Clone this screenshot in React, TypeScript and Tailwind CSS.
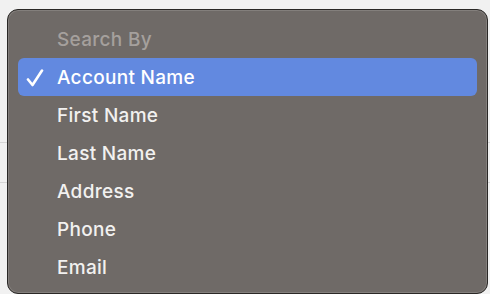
import React from "react";

const items = ["Account Name", "First Name", "Last Name", "Address", "Phone", "Email"];

export default function App() {
  return (
    <div className="relative w-[490px] h-[294px] overflow-hidden bg-[#f1f1f1]" style={{ fontFamily: "Inter, 'Noto Sans', sans-serif" }}>
      <div className="absolute left-0 right-0 top-[142px] h-px bg-[#d6d6d6]" />
      <div className="absolute left-0 right-0 top-[182px] h-px bg-[#d6d6d6]" />
      <div className="absolute left-[7px] top-[9px] w-[481px] h-[285px] rounded-[11px] border border-[#2a2826] bg-[#6f6a67] shadow-[inset_0_0_0_1px_rgba(255,255,255,0.14)] pt-[10px]">
        <div className="h-[38px] flex items-center pt-[2px] pl-[49px] text-[19px] font-medium text-[#a5a09d] tracking-[0.3px]">Search By</div>
        {items.map((it, i) => (
          <div
            key={it}
            className={
              i === 0
                ? "relative mx-[10px] h-[38px] rounded-[6px] bg-[#6289e0] flex items-center pt-[2px] pl-[39px] text-[19px] font-medium text-white tracking-[0.3px]"
                : "mx-[10px] h-[38px] flex items-center pt-[2px] pl-[39px] text-[19px] font-medium text-[#f2f1f0] tracking-[0.3px]"
            }
          >
            {i === 0 && (
              <svg className="absolute left-[8px] top-[11px]" width="18" height="18" viewBox="0 0 18 18">
                <path d="M2 10.5 L6.5 16 L16 1.5" fill="none" stroke="white" strokeWidth="2.6" strokeLinecap="round" strokeLinejoin="round" />
              </svg>
            )}
            {it}
          </div>
        ))}
      </div>
    </div>
  );
}
